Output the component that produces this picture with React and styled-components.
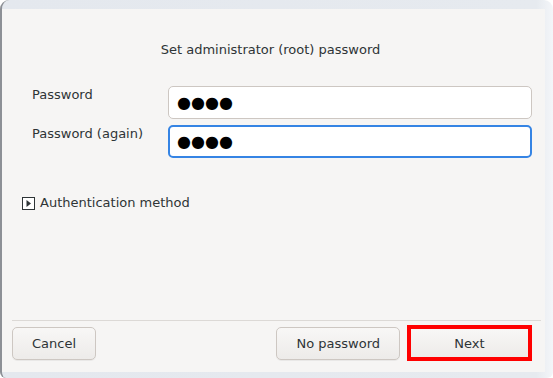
import React from "react";
import styled, { createGlobalStyle } from "styled-components";

const GlobalStyle = createGlobalStyle`
  html, body {
    margin: 0;
    padding: 0;
    background: #ffffff;
  }
  body {
    font-family: "DejaVu Sans", "Liberation Sans", sans-serif;
    font-size: 13px;
    color: #2e3436;
  }
`;

export default function App() {
  return (
    <>
      <GlobalStyle />
      <Frame>
        <Window>
          <Body>
            <Title>Set administrator (root) password</Title>
            <Form>
              <Label htmlFor="pw1">Password</Label>
              <Field id="pw1" readOnly value="●●●●" />
              <Label htmlFor="pw2">Password (again)</Label>
              <Field id="pw2" readOnly value="●●●●" $focused />
            </Form>
            <Expander>
              <svg width="13" height="13" viewBox="0 0 13 13">
                <rect x="0.5" y="0.5" width="12" height="12" fill="#ffffff" stroke="#2e3436" />
                <path d="M4.5 3 L9 6.5 L4.5 10 Z" fill="#2e3436" />
              </svg>
              <span>Authentication method</span>
            </Expander>
          </Body>
          <Footer>
            <Separator />
            <ButtonRow>
              <Button>Cancel</Button>
              <Spacer />
              <Button>No password</Button>
              <Button $highlight $width={125}>Next</Button>
            </ButtonRow>
          </Footer>
        </Window>
      </Frame>
    </>
  );
}

const Frame = styled.div`
  width: 553px;
  height: 378px;
  box-sizing: border-box;
  background: linear-gradient(to right, #e4e8ee 0%, #e6eaef 97%, #f4f6f9 100%);
  border-radius: 9px 9px 6px 6px;
  border-left: 2px solid #8d9096;
  padding: 9px 8px 6px 0;
  display: flex;
`;

const Window = styled.div`
  flex: 1;
  display: flex;
  flex-direction: column;
  background: #f6f5f4;
`;

const Body = styled.div`
  flex: 1;
  display: flex;
  flex-direction: column;
  padding-top: 33px;
`;

const Title = styled.div`
  text-align: center;
  line-height: 16px;
  padding-right: 6px;
`;

const Form = styled.div`
  display: grid;
  grid-template-columns: 136px 364px;
  row-gap: 6px;
  margin: 28px 0 0 30px;
`;

const Label = styled.label`
  align-self: start;
  line-height: 16px;
  padding-top: 1px;
`;

const Field = styled.input`
  box-sizing: border-box;
  height: 33px;
  width: 100%;
  margin: 0;
  padding: 0 8px;
  font-family: "DejaVu Sans", sans-serif;
  font-size: 16px;
  color: #000000;
  background: #ffffff;
  border: ${(p) => (p.$focused ? "2px solid #3584e4" : "1px solid #cdc7c2")};
  padding-left: ${(p) => (p.$focused ? "7px" : "8px")};
  border-radius: 5px;
  outline: none;
`;

const Expander = styled.div`
  display: flex;
  align-items: center;
  gap: 5px;
  margin: 37px 0 0 20px;
  line-height: 16px;
  svg {
    display: block;
  }
`;

const Footer = styled.div`
  display: flex;
  flex-direction: column;
`;

const Separator = styled.div`
  height: 1px;
  background: #dcd9d6;
  margin: 0 4px 0 10px;
`;

const ButtonRow = styled.div`
  display: flex;
  align-items: center;
  gap: 7px;
  height: 36px;
  padding: 4px 13px 11px 10px;
`;

const Spacer = styled.div`
  flex: 1;
`;

const Button = styled.button`
  box-sizing: border-box;
  height: ${(p) => (p.$highlight ? "36px" : "33px")};
  width: ${(p) => (p.$width ? `${p.$width}px` : "auto")};
  padding: 0 19px;
  font-family: "DejaVu Sans", sans-serif;
  font-size: 13px;
  color: #2e3436;
  background: linear-gradient(to bottom, #f8f7f6, #edebe9);
  border: ${(p) => (p.$highlight ? "4px solid #ff0000" : "1px solid #cdc7c2")};
  border-radius: ${(p) => (p.$highlight ? "0" : "5px")};
  box-shadow: ${(p) => (p.$highlight ? "none" : "0 1px 0 rgba(0,0,0,0.05)")};
  cursor: pointer;
`;
